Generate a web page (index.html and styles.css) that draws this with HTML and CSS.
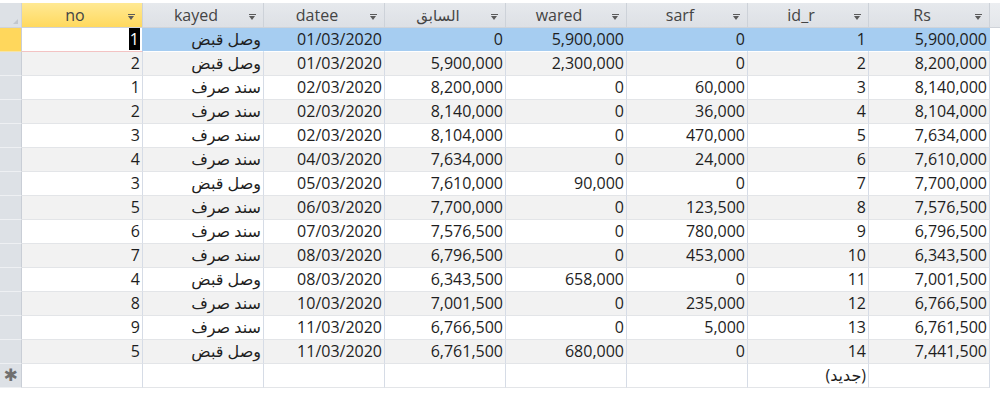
FILE: index.html
```html
<!DOCTYPE html>
<html>
<head>
<meta charset="utf-8">
<link rel="stylesheet" href="styles.css">
</head>
<body>
<div class="sheet">
  <div class="grid">
    <div class="hd corner"><span class="corner-tri"></span></div>
    <div class="hd active"><span class="lbl">no</span><span class="arrow"></span></div>
    <div class="hd"><span class="lbl">kayed</span><span class="arrow"></span></div>
    <div class="hd"><span class="lbl">datee</span><span class="arrow"></span></div>
    <div class="hd"><span class="lbl ar">السابق</span><span class="arrow"></span></div>
    <div class="hd"><span class="lbl">wared</span><span class="arrow"></span></div>
    <div class="hd"><span class="lbl">sarf</span><span class="arrow"></span></div>
    <div class="hd"><span class="lbl">id_r</span><span class="arrow"></span></div>
    <div class="hd"><span class="lbl">Rs</span><span class="arrow"></span></div>
    <div class="hd filler"></div>

    <div class="sel cur"></div>
    <div class="c edit"><span class="caret">1</span></div>
    <div class="c blue">وصل قبض</div>
    <div class="c blue">01/03/2020</div>
    <div class="c blue">0</div>
    <div class="c blue">5,900,000</div>
    <div class="c blue">0</div>
    <div class="c blue">1</div>
    <div class="c blue">5,900,000</div>
    <div class="f"></div>

    <div class="sel"></div>
    <div class="c g">2</div><div class="c g">وصل قبض</div><div class="c g">01/03/2020</div><div class="c g">5,900,000</div><div class="c g">2,300,000</div><div class="c g">0</div><div class="c g">2</div><div class="c g">8,200,000</div><div class="f"></div>

    <div class="sel"></div>
    <div class="c">1</div><div class="c">سند صرف</div><div class="c">02/03/2020</div><div class="c">8,200,000</div><div class="c">0</div><div class="c">60,000</div><div class="c">3</div><div class="c">8,140,000</div><div class="f"></div>

    <div class="sel"></div>
    <div class="c g">2</div><div class="c g">سند صرف</div><div class="c g">02/03/2020</div><div class="c g">8,140,000</div><div class="c g">0</div><div class="c g">36,000</div><div class="c g">4</div><div class="c g">8,104,000</div><div class="f"></div>

    <div class="sel"></div>
    <div class="c">3</div><div class="c">سند صرف</div><div class="c">02/03/2020</div><div class="c">8,104,000</div><div class="c">0</div><div class="c">470,000</div><div class="c">5</div><div class="c">7,634,000</div><div class="f"></div>

    <div class="sel"></div>
    <div class="c g">4</div><div class="c g">سند صرف</div><div class="c g">04/03/2020</div><div class="c g">7,634,000</div><div class="c g">0</div><div class="c g">24,000</div><div class="c g">6</div><div class="c g">7,610,000</div><div class="f"></div>

    <div class="sel"></div>
    <div class="c">3</div><div class="c">وصل قبض</div><div class="c">05/03/2020</div><div class="c">7,610,000</div><div class="c">90,000</div><div class="c">0</div><div class="c">7</div><div class="c">7,700,000</div><div class="f"></div>

    <div class="sel"></div>
    <div class="c g">5</div><div class="c g">سند صرف</div><div class="c g">06/03/2020</div><div class="c g">7,700,000</div><div class="c g">0</div><div class="c g">123,500</div><div class="c g">8</div><div class="c g">7,576,500</div><div class="f"></div>

    <div class="sel"></div>
    <div class="c">6</div><div class="c">سند صرف</div><div class="c">07/03/2020</div><div class="c">7,576,500</div><div class="c">0</div><div class="c">780,000</div><div class="c">9</div><div class="c">6,796,500</div><div class="f"></div>

    <div class="sel"></div>
    <div class="c g">7</div><div class="c g">سند صرف</div><div class="c g">08/03/2020</div><div class="c g">6,796,500</div><div class="c g">0</div><div class="c g">453,000</div><div class="c g">10</div><div class="c g">6,343,500</div><div class="f"></div>

    <div class="sel"></div>
    <div class="c">4</div><div class="c">وصل قبض</div><div class="c">08/03/2020</div><div class="c">6,343,500</div><div class="c">658,000</div><div class="c">0</div><div class="c">11</div><div class="c">7,001,500</div><div class="f"></div>

    <div class="sel"></div>
    <div class="c g">8</div><div class="c g">سند صرف</div><div class="c g">10/03/2020</div><div class="c g">7,001,500</div><div class="c g">0</div><div class="c g">235,000</div><div class="c g">12</div><div class="c g">6,766,500</div><div class="f"></div>

    <div class="sel"></div>
    <div class="c">9</div><div class="c">سند صرف</div><div class="c">11/03/2020</div><div class="c">6,766,500</div><div class="c">0</div><div class="c">5,000</div><div class="c">13</div><div class="c">6,761,500</div><div class="f"></div>

    <div class="sel"></div>
    <div class="c g">5</div><div class="c g">وصل قبض</div><div class="c g">11/03/2020</div><div class="c g">6,761,500</div><div class="c g">680,000</div><div class="c g">0</div><div class="c g">14</div><div class="c g">7,441,500</div><div class="f"></div>

    <div class="sel star">✱</div>
    <div class="c"></div><div class="c"></div><div class="c"></div><div class="c"></div><div class="c"></div><div class="c"></div><div class="c">(جديد)</div><div class="c"></div><div class="f"></div>
  </div>
</div>
</body>
</html>
```

FILE: styles.css
```css
html, body {
  margin: 0;
  padding: 0;
  background: #ffffff;
}

.sheet {
  width: 1000px;
  height: 394px;
  overflow: hidden;
  padding-top: 3px;
  box-sizing: border-box;
  background: #ffffff;
  font-family: "Open Sans", "DejaVu Sans", sans-serif;
  font-size: 16px;
  color: #1e1e1e;
}

.grid {
  display: grid;
  grid-template-columns: 22px repeat(8, 121px) 1fr;
  grid-auto-rows: 24px;
  grid-template-rows: 25px;
}

.hd {
  box-sizing: border-box;
  display: flex;
  align-items: center;
  background: linear-gradient(#e6e9ed, #dde0e5);
  border-right: 1px solid #cdd2d9;
  border-bottom: 1px solid #cfd3d9;
  color: #444444;
  padding-right: 7px;
}

.hd.active {
  background: linear-gradient(#ffe994, #ffd95e);
}

.hd.corner {
  position: relative;
  padding: 0;
  background: #dde1e6;
}

.corner-tri {
  position: absolute;
  right: 3px;
  bottom: 3px;
  width: 0;
  height: 0;
  border-left: 5px solid transparent;
  border-bottom: 5px solid #c2c7ce;
}

.hd.filler {
  border-right: 0;
  background: linear-gradient(#eceef1, #e4e7eb);
}

.lbl {
  flex: 1;
  text-align: center;
  line-height: 22px;
}

.lbl.ar {
  font-size: 15px;
}

.arrow {
  position: relative;
  width: 7px;
  height: 6px;
  margin-top: 3px;
}

.arrow::before {
  content: "";
  position: absolute;
  left: 0;
  top: 0;
  width: 7px;
  height: 1px;
  background: #5a5a5a;
}

.arrow::after {
  content: "";
  position: absolute;
  left: 0;
  top: 2px;
  width: 0;
  height: 0;
  border-left: 3.5px solid transparent;
  border-right: 3.5px solid transparent;
  border-top: 4px solid #5a5a5a;
}

.sel {
  box-sizing: border-box;
  background: #dde1e6;
  border-right: 1px solid #c9ced6;
  border-bottom: 1px solid #eef0f3;
}

.sel.cur {
  background: #ffd75c;
  border-bottom-color: #f5e3a8;
}

.sel.star {
  color: #707070;
  font-size: 17px;
  line-height: 23px;
  text-align: center;
  font-family: "DejaVu Sans", sans-serif;
}

.c {
  box-sizing: border-box;
  border-right: 1px solid #d6dce6;
  border-bottom: 1px solid #e3e5e8;
  text-align: right;
  padding-right: 2px;
  line-height: 23px;
  white-space: nowrap;
  overflow: hidden;
  background: #ffffff;
}

.c.g {
  background: #f2f2f2;
}

.c.blue {
  background: #a6cdf1;
  border-right-color: #a6cdf1;
  border-bottom-color: #ffffff;
}

.c.edit {
  border-bottom: 1px solid #f3c3c3;
  border-right-color: #a6cdf1;
}

.caret {
  display: inline-block;
  background: #000000;
  color: #ffffff;
  padding: 0 1px;
  line-height: 22px;
}

.f {
  background: #ffffff;
}
```
